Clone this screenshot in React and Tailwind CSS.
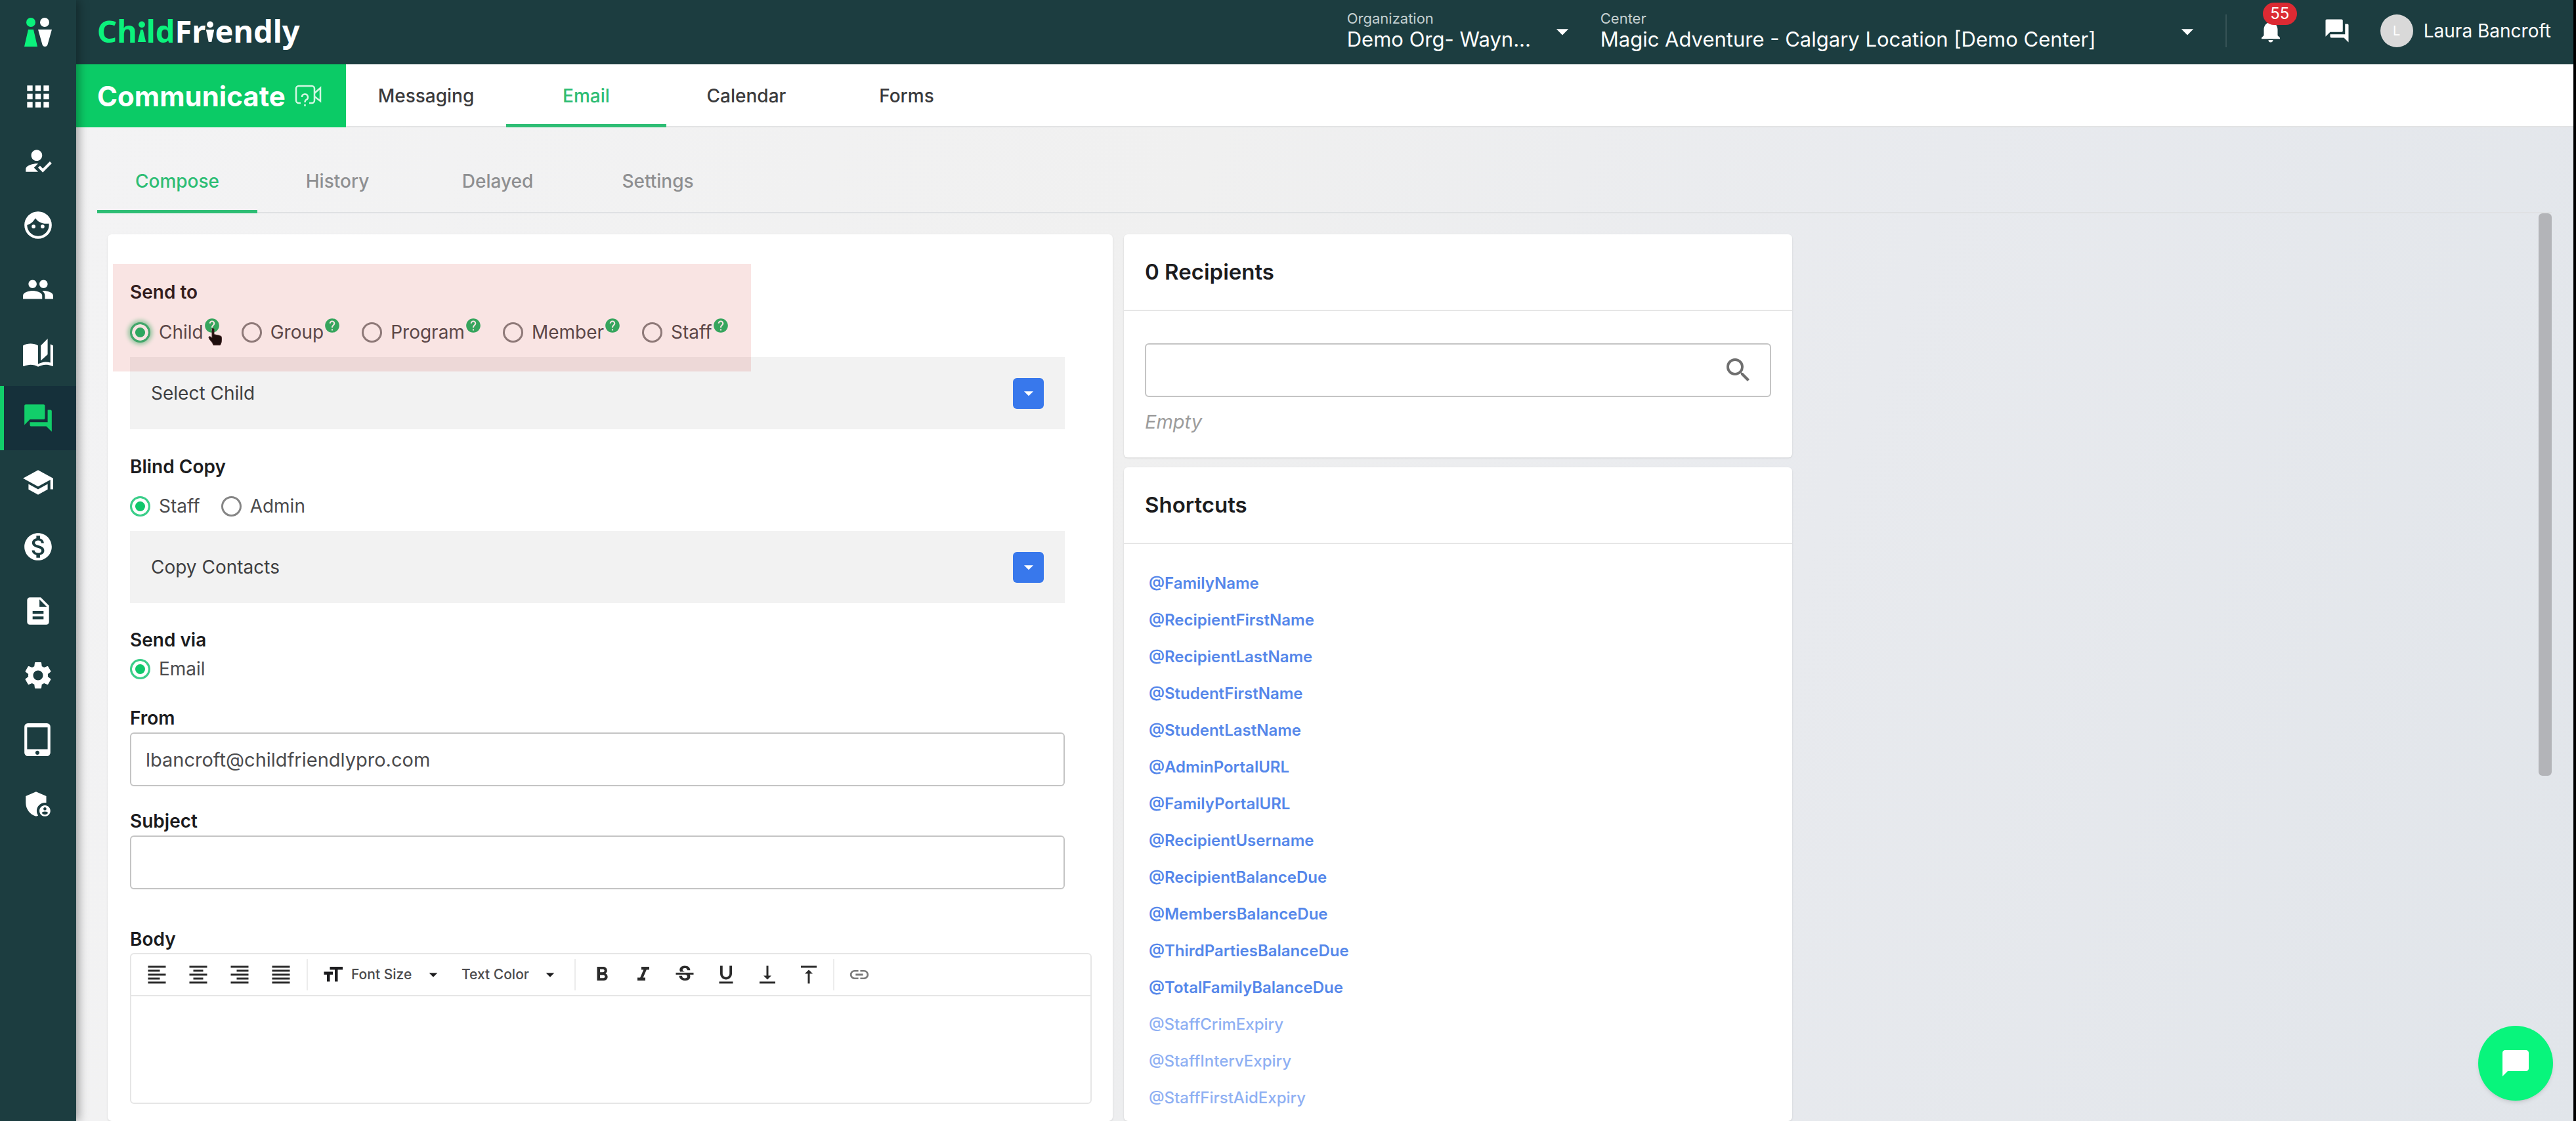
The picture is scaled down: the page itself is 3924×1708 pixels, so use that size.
import React, { useState } from 'react';
import {
  MdAdminPanelSettings,
  MdApps,
  MdArrowDropDown,
  MdAutoStories,
  MdChatBubble,
  MdDescription,
  MdFace,
  MdFormatAlignCenter,
  MdFormatAlignJustify,
  MdFormatAlignLeft,
  MdFormatAlignRight,
  MdFormatBold,
  MdFormatItalic,
  MdFormatSize,
  MdFormatUnderlined,
  MdForum,
  MdHelp,
  MdHowToReg,
  MdInsertLink,
  MdMonetizationOn,
  MdNotifications,
  MdPeople,
  MdSchool,
  MdSearch,
  MdSettings,
  MdStrikethroughS,
  MdTabletMac,
  MdVerticalAlignBottom,
  MdVerticalAlignTop,
} from 'react-icons/md';

// Round face with solid hair
const FaceIcon = ({ className }) => (
  <svg viewBox="0 0 24 24" className={className} aria-hidden="true">
    <circle cx="12" cy="12" r="9" fill="none" stroke="currentColor" strokeWidth="2" />
    <path d="M3 11C3 5.500 7.500 2.500 12 2.500S21 6 21 10.500c-1 .3-2 .4-3 .4-3.500 0-6.200-1.500-8-4C8.600 9.300 6.500 11.300 3.500 12z" fill="currentColor" />
    <circle cx="8.700" cy="13" r="1.400" fill="currentColor" />
    <circle cx="15.300" cy="13" r="1.400" fill="currentColor" />
  </svg>
);

const sideLinks = [
  { label: 'Dashboard', icon: MdApps },
  { label: 'Attendance', icon: MdHowToReg },
  { label: 'Children', icon: FaceIcon },
  { label: 'Families', icon: MdPeople },
  { label: 'Programs', icon: MdAutoStories },
  { label: 'Communicate', icon: MdForum, active: true },
  { label: 'Learning', icon: MdSchool },
  { label: 'Billing', icon: MdMonetizationOn },
  { label: 'Reports', icon: MdDescription },
  { label: 'Settings', icon: MdSettings },
  { label: 'Kiosk', icon: MdTabletMac },
  { label: 'Admin', icon: MdAdminPanelSettings },
];

const shortcuts = [
  { name: '@FamilyName' },
  { name: '@RecipientFirstName' },
  { name: '@RecipientLastName' },
  { name: '@StudentFirstName' },
  { name: '@StudentLastName' },
  { name: '@AdminPortalURL' },
  { name: '@FamilyPortalURL' },
  { name: '@RecipientUsername' },
  { name: '@RecipientBalanceDue' },
  { name: '@MembersBalanceDue' },
  { name: '@ThirdPartiesBalanceDue' },
  { name: '@TotalFamilyBalanceDue' },
  { name: '@StaffCrimExpiry', muted: true },
  { name: '@StaffIntervExpiry', muted: true },
  { name: '@StaffFirstAidExpiry', muted: true },
];

const alignTools = [
  { label: 'Align left', icon: MdFormatAlignLeft },
  { label: 'Align center', icon: MdFormatAlignCenter },
  { label: 'Align right', icon: MdFormatAlignRight },
  { label: 'Justify', icon: MdFormatAlignJustify },
];

const styleTools = [
  { label: 'Bold', icon: MdFormatBold },
  { label: 'Italic', icon: MdFormatItalic },
  { label: 'Strikethrough', icon: MdStrikethroughS },
  { label: 'Underline', icon: MdFormatUnderlined },
  { label: 'Subscript', icon: MdVerticalAlignBottom },
  { label: 'Superscript', icon: MdVerticalAlignTop },
];

// The "i" of the wordmark is a small figure standing over the letter
const FigureI = ({ flipped }) => (
  <span className="relative inline-block">
    <span className="text-transparent">i</span>
    <svg viewBox="0 0 14 36" className="absolute bottom-[15px] left-0 h-[32px] w-full" fill="currentColor" aria-hidden="true">
      <circle cx="7" cy="6" r="5.5" />
      <path d={flipped ? 'M0 15h14L9.500 36h-5z' : 'M5 15h4l5 21H0z'} />
    </svg>
  </span>
);

const Sidebar = () => (
  <aside className="relative z-10 flex w-[116px] shrink-0 flex-col bg-[#1c3d40] shadow-[4px_0_14px_rgba(0,0,0,0.35)]">
    <a href="#home" aria-label="ChildFriendly home" className="flex h-[98px] items-center justify-center">
      <svg viewBox="0 0 42 44" className="h-[44px] w-[42px]">
        <circle cx="10" cy="7" r="7" fill="#0bf27c" />
        <path d="M6 18h8l6 26H0z" fill="#0bf27c" />
        <circle cx="31" cy="7" r="7" fill="#fff" />
        <path d="M21 18h21l-6.500 23q-1 3-4 3t-4-3z" fill="#fff" />
      </svg>
    </a>
    <nav>
      {sideLinks.map(({ label, icon: Icon, active }) => (
        <a
          key={label}
          href={`#${label.toLowerCase()}`}
          aria-label={label}
          className={
            active
              ? 'relative flex h-[98px] items-center justify-center bg-[#15303a] text-[#12ce6a]'
              : 'relative flex h-[98px] items-center justify-center text-white'
          }
        >
          {active && <span className="absolute inset-y-0 left-0 w-[6px] bg-[#12ce6a]" />}
          <Icon className="size-[50px]" />
        </a>
      ))}
    </nav>
  </aside>
);

const HeaderSelect = ({ id, label, value, className }) => (
  <div className={`relative flex flex-col pb-[2px] ${className}`}>
    <label htmlFor={id} className="text-[22px] leading-[28px] text-[#c5d0d1]">
      {label}
    </label>
    <select id={id} className="w-full appearance-none text-[31px] leading-[36px] text-white">
      <option>{value}</option>
    </select>
    <MdArrowDropDown className="pointer-events-none absolute top-[12px] right-0 size-[44px] text-white" />
  </div>
);

const Header = () => (
  <header className="flex h-[98px] shrink-0 items-center bg-[#1c3d40] pr-[34px] pb-[4px] pl-[32px]">
    <a href="#home" className="font-['Noto_Sans',sans-serif] text-[47px] leading-[64px] font-bold text-white">
      <span className="text-[#0bf27c]">
        Ch
        <FigureI />
        ld
      </span>
      Fr
      <FigureI flipped />
      endly
    </a>
    <div className="ml-auto flex items-center">
      <HeaderSelect id="organization" label="Organization" value="Demo Org- Wayn..." className="w-[350px]" />
      <HeaderSelect id="center" label="Center" value="Magic Adventure - Calgary Location [Demo Center]" className="ml-[36px] w-[916px]" />
      <span className="ml-[36px] h-[50px] w-[2px] bg-[#365356]" />
      <button type="button" aria-label="Notifications" className="relative ml-[46px] text-white">
        <MdNotifications className="size-[42px]" />
        <span className="absolute -top-[22px] left-[9px] flex h-[34px] w-[52px] items-center justify-center rounded-full bg-[#dc2a33] text-[24px] leading-[34px]">
          55
        </span>
      </button>
      <button type="button" aria-label="Messages" className="ml-[59px] text-white">
        <MdForum className="size-[42px]" />
      </button>
      <button type="button" className="ml-[45px] flex items-center gap-[16px] text-[28px] text-white">
        <span className="flex size-[50px] items-center justify-center rounded-full bg-[#d9d9d9] text-[20px] text-white">L</span>
        Laura Bancroft
      </button>
    </div>
  </header>
);

const topTabs = ['Messaging', 'Email', 'Calendar', 'Forms'];
const subTabs = ['Compose', 'History', 'Delayed', 'Settings'];

const TopTabs = () => (
  <div className="flex h-[96px] shrink-0 border-b-2 border-[#e2e3e4] bg-white">
    <h1 className="-mb-[2px] flex w-[411px] items-center gap-[14px] bg-[#0bcb66] pl-[32px] text-[42px] font-bold text-white">
      Communicate
      <svg viewBox="0 0 42 34" className="h-[34px] w-[42px]" fill="none" stroke="#d3f7e2" strokeWidth="2.500" aria-hidden="true">
        <path d="M9 28H6a4 4 0 0 1-4-4V6a4 4 0 0 1 4-4h20a4 4 0 0 1 4 4v18a4 4 0 0 1-4 4h-4" />
        <path d="M30 13l9-8v20l-9-7" />
        <path d="M11 19a4.500 4.500 0 1 1 6.500 4q-2 1-2 4M15.500 30v3" />
      </svg>
    </h1>
    <nav className="-mb-[2px] flex">
      {topTabs.map((tab) => (
        <a
          key={tab}
          href={`#${tab.toLowerCase()}`}
          className={
            tab === 'Email'
              ? 'flex w-[244px] items-center justify-center border-b-5 border-[#2dbd74] pt-[5px] text-[28px] font-medium text-[#2dbd74]'
              : 'flex w-[244px] items-center justify-center text-[28px] font-medium text-[#3a3a3c]'
          }
        >
          {tab}
        </a>
      ))}
    </nav>
  </div>
);

const SubTabs = () => (
  <nav className="ml-[32px] flex h-[131px] shrink-0 border-b-2 border-[#dfe1e3] pt-[38px]">
    {subTabs.map((tab) => (
      <a
        key={tab}
        href={`#${tab.toLowerCase()}`}
        className={
          tab === 'Compose'
            ? '-mb-[2px] flex w-[244px] items-center justify-center border-b-5 border-[#2dbd74] text-[28px] font-medium text-[#2dbd74]'
            : 'flex w-[244px] items-center justify-center pb-[3px] text-[28px] font-medium text-[#8e8f91]'
        }
      >
        {tab}
      </a>
    ))}
  </nav>
);

const RadioGroup = ({ name, options, help, focused, className }) => {
  const [value, setValue] = useState(options[0]);

  return (
    <div className={`flex h-[40px] items-center gap-[32px] ${className}`}>
      {options.map((option) => (
        <label key={option} className="flex items-center text-[28px] leading-[40px] text-[#4b4b4d]">
          <input
            type="radio"
            name={name}
            value={option}
            checked={value === option}
            onChange={() => setValue(option)}
            className={
              focused
                ? 'mr-[13px] size-[31px] appearance-none rounded-full border-3 border-[#858585] checked:border-[#2fb875] checked:bg-[#16b868] checked:shadow-[inset_0_0_0_5px_#fff,0_0_6px_3px_#8fdcb3]'
                : 'mr-[13px] size-[31px] appearance-none rounded-full border-3 border-[#858585] checked:border-[#3cce8a] checked:bg-[#0fc76b] checked:shadow-[inset_0_0_0_5px_#fff]'
            }
          />
          {option}
          {help && <MdHelp className="mb-[20px] size-[26px] text-[#1fb766]" />}
        </label>
      ))}
    </div>
  );
};

const PickerBar = ({ label }) => (
  <div className="mt-[18px] mr-[41px] flex h-[110px] items-center justify-between bg-[#f2f2f2] px-[32px] text-[28px] text-[#3f3f41]">
    {label}
    <button type="button" aria-label={label} className="flex size-[47px] items-center justify-center rounded-md bg-[#3878ec] text-white">
      <MdArrowDropDown className="size-[34px]" />
    </button>
  </div>
);

const SectionTitle = ({ children }) => (
  <h2 className="text-[28px] leading-[40px] font-semibold text-[#1c1c1e]">{children}</h2>
);

const TextField = ({ id, label, type, defaultValue, className }) => (
  <div className={`mr-[41px] ${className}`}>
    <label htmlFor={id} className="block text-[28px] leading-[40px] font-semibold text-[#1c1c1e]">
      {label}
    </label>
    <input
      id={id}
      type={type}
      defaultValue={defaultValue}
      className="mt-[2px] block h-[82px] w-full rounded-md border-2 border-[#c4c4c4] bg-white px-[22px] text-[29px] text-[#4b4b4d]"
    />
  </div>
);

const Tool = ({ label, icon: Icon }) => (
  <button type="button" aria-label={label} className="flex w-[63px] items-center justify-center text-[#2b2b2b]">
    <Icon className="size-[36px]" />
  </button>
);

const Divider = () => <span className="h-[48px] w-[2px] bg-[#ececec]" />;

const Editor = () => (
  <div className="mt-[56px]">
    <label htmlFor="body" className="block text-[28px] leading-[40px] font-semibold text-[#1c1c1e]">
      Body
    </label>
    <div className="mt-[1px] rounded-md border-2 border-[#e6e6e6]">
      <div className="flex h-[64px] items-center border-b-2 border-[#e6e6e6] pl-[7px]">
        {alignTools.map((tool) => (
          <Tool key={tool.label} {...tool} />
        ))}
        <span className="w-[8px]" />
        <Divider />
        <button type="button" className="ml-[20px] flex w-[186px] items-center text-[21px] font-medium text-[#4b4b4d]">
          <MdFormatSize className="mr-[10px] size-[36px] shrink-0 text-[#1c1c1e]" />
          <span className="whitespace-nowrap">Font Size</span>
          <MdArrowDropDown className="ml-auto size-[30px] shrink-0 text-[#1c1c1e]" />
        </button>
        <button type="button" className="ml-[28px] flex w-[150px] items-center text-[21px] font-medium text-[#4b4b4d]">
          <span className="whitespace-nowrap">Text Color</span>
          <MdArrowDropDown className="ml-auto size-[30px] shrink-0 text-[#1c1c1e]" />
        </button>
        <span className="w-[22px]" />
        <Divider />
        <span className="w-[8px]" />
        {styleTools.map((tool) => (
          <Tool key={tool.label} {...tool} />
        ))}
        <span className="w-[6px]" />
        <Divider />
        <span className="w-[6px]" />
        <button type="button" aria-label="Insert link" className="flex w-[63px] items-center justify-center text-[#7a7a7a]">
          <MdInsertLink className="size-[34px]" />
        </button>
      </div>
      <textarea id="body" className="block h-[162px] w-full resize-none px-[22px] text-[29px] outline-none" />
    </div>
  </div>
);

const HandCursor = () => (
  <svg viewBox="0 0 24 28" className="absolute top-[74px] left-[118px] h-[28px] w-[24px]" aria-hidden="true">
    <path
      d="M7 1.500q2-1 3 1V11q1.500-1 3 .5 1.500-.8 3 .5 1.500-.8 3 .8 2.500-.3 2.500 3v4q0 3-2 7H9q-1-4-4-6.500-2-2-3-5 0-2 2-1.500L7 16z"
      fill="#1d0d0d"
      stroke="#4a2c2c"
      strokeWidth="1"
    />
  </svg>
);

const ComposeForm = () => (
  <section className="rounded-md bg-white pt-[68px] pr-[32px] pl-[34px] shadow-sm">
    <div className="relative">
      <SectionTitle>Send to</SectionTitle>
      <RadioGroup name="send-to" options={['Child', 'Group', 'Program', 'Member', 'Staff']} help focused className="mt-[21px]" />
      <PickerBar label="Select Child" />
      {/* highlighted step */}
      <div className="pointer-events-none absolute -top-[23px] -left-[26px] h-[164px] w-[972px] bg-[#d12f28]/13" />
      <HandCursor />
    </div>

    <div className="mt-[37px]">
      <SectionTitle>Blind Copy</SectionTitle>
      <RadioGroup name="blind-copy" options={['Staff', 'Admin']} className="mt-[20px]" />
      <PickerBar label="Copy Contacts" />
    </div>

    <div className="mt-[36px]">
      <SectionTitle>Send via</SectionTitle>
      <RadioGroup name="send-via" options={['Email']} className="mt-[4px]" />
    </div>

    <TextField id="from" label="From" type="email" defaultValue="lbancroft@childfriendlypro.com" className="mt-[35px]" />
    <TextField id="subject" label="Subject" type="text" className="mt-[33px]" />
    <Editor />
  </section>
);

const Recipients = () => (
  <section className="h-[340px] rounded-md bg-white shadow-sm">
    <h2 className="flex h-[117px] items-center border-b-2 border-[#e6e6e6] px-[32px] text-[33px] font-semibold text-[#1c1c1e]">
      0 Recipients
    </h2>
    <div className="px-[32px] pt-[49px]">
      <div className="flex h-[82px] items-center rounded-md border-2 border-[#c4c4c4] pr-[24px]">
        <input type="search" aria-label="Search recipients" className="h-full flex-1 px-[20px] text-[29px] outline-none" />
        <button type="button" aria-label="Search" className="text-[#6f6f6f]">
          <MdSearch className="size-[48px]" />
        </button>
      </div>
      <p className="mt-[18px] text-[29px] leading-[40px] text-[#9c9c9c] italic">Empty</p>
    </div>
  </section>
);

const Shortcuts = () => (
  <section className="flex-1 rounded-md bg-white shadow-sm">
    <h2 className="flex h-[117px] items-center border-b-2 border-[#e6e6e6] px-[32px] text-[33px] font-semibold text-[#1c1c1e]">
      Shortcuts
    </h2>
    <ul className="px-[38px] pt-[32px]">
      {shortcuts.map(({ name, muted }) => (
        <li key={name} className="h-[56px]">
          <a
            href={name.replace('@', '#')}
            className={
              muted
                ? 'text-[24px] leading-[56px] font-medium text-[#8fb0f3]'
                : 'text-[24px] leading-[56px] font-semibold text-[#5587ea]'
            }
          >
            {name}
          </a>
        </li>
      ))}
    </ul>
  </section>
);

const App = () => {
  return (
    <div className="flex h-screen overflow-hidden border-r-4 border-black font-['Inter',sans-serif]">
      <Sidebar />
      <div className="flex min-w-0 flex-1 flex-col bg-[#1c3d40]">
        <Header />
        <TopTabs />
        <div className="flex min-h-0 flex-1 flex-col bg-linear-[110deg,#f3f3f4_0%,#f0f0f0_40%,#e8eaee_66%,#e1e5ea_100%] pr-[33px]">
          <SubTabs />
          <main className="flex min-h-0 flex-1">
            <div className="grid min-h-0 flex-1 grid-cols-[1531fr_1018fr_1120fr] gap-[17px] overflow-hidden pt-[32px] pl-[48px]">
              <ComposeForm />
              <div className="flex flex-col gap-[15px]">
                <Recipients />
                <Shortcuts />
              </div>
            </div>
            {/* scrollbar thumb */}
            <div className="h-[62%] w-[20px] shrink-0 rounded-md bg-[#b3b4b8]" />
          </main>
        </div>
      </div>
      <button
        type="button"
        aria-label="Open chat"
        className="fixed right-[35px] bottom-[31px] flex size-[114px] items-center justify-center rounded-full bg-[#08f57c] text-white shadow-md"
      >
        <MdChatBubble className="size-[48px]" />
      </button>
    </div>
  );
};

export default App;
